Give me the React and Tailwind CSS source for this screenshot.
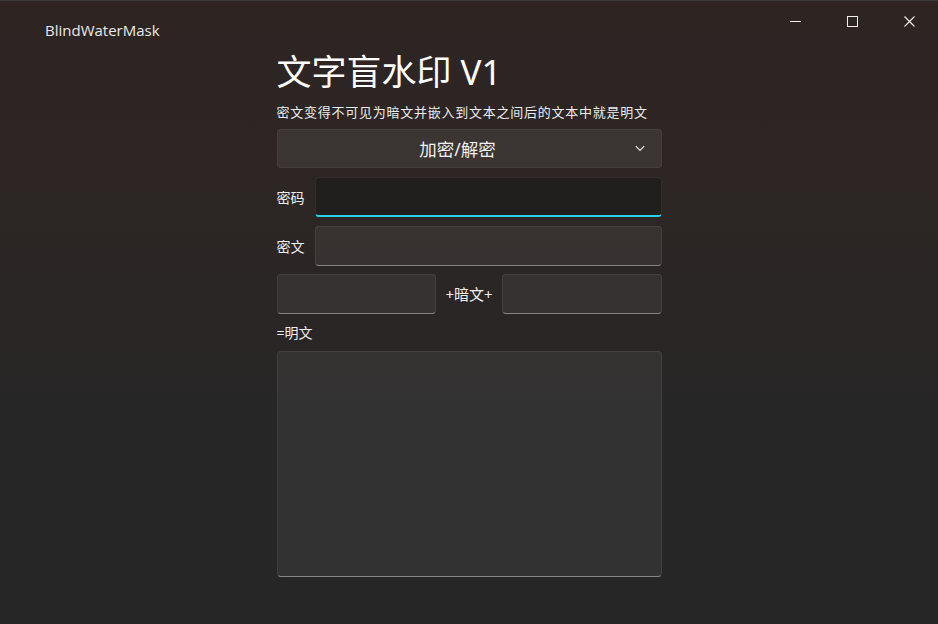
export default function App() {
  const input =
    "rounded-[4px] bg-white/[0.06] border border-white/[0.07] border-b-[#8a8684] h-[40px]";
  return (
    <div className="relative w-[938px] h-[624px] overflow-hidden text-white bg-[linear-gradient(180deg,#2e2523_0%,#2c2624_35%,#272626_65%,#262626_100%)] font-['Noto_Sans','Noto_Sans_CJK_SC',sans-serif]">
      <div className="flex justify-between h-[48px] border-t border-[#3a3a3a]">
        <div className="pl-[45px] pt-[19px] text-[15px] leading-[20px] text-[#e8e8e8] font-['Open_Sans','Noto_Sans_CJK_SC',sans-serif]">
          BlindWaterMask
        </div>
        <div className="flex">
          <div className="w-[57px] h-[40px] flex items-center justify-center">
            <svg width="11" height="11" viewBox="0 0 11 11">
              <path d="M0 5.5 H11" stroke="#f0f0f0" strokeWidth="1" />
            </svg>
          </div>
          <div className="w-[57px] h-[40px] flex items-center justify-center">
            <svg width="11" height="11" viewBox="0 0 11 11">
              <rect x="0.5" y="0.5" width="10" height="10" fill="none" stroke="#f0f0f0" strokeWidth="1" />
            </svg>
          </div>
          <div className="w-[57px] h-[40px] flex items-center justify-center">
            <svg width="11" height="11" viewBox="0 0 11 11">
              <path d="M0.5 0.5 L10.5 10.5 M10.5 0.5 L0.5 10.5" stroke="#f0f0f0" strokeWidth="1.1" />
            </svg>
          </div>
        </div>
      </div>

      <div className="mx-auto w-[385px] flex flex-col">
        <div className="text-[35px] leading-[44px] mt-[2px] text-white">文字盲水印 V1</div>
        <div className="text-[13px] tracking-[0.75px] leading-[18px] mt-[9px] text-[#ececec] whitespace-nowrap">
          密文变得不可见为暗文并嵌入到文本之间后的文本中就是明文
        </div>
        <div className="mt-[8px] h-[39px] rounded-[4px] bg-white/[0.07] border border-white/[0.05] flex items-center relative">
          <div className="flex-1 text-center text-[17.5px] leading-[24px] text-[#f0f0f0] pr-[23px]">加密/解密</div>
          <svg className="absolute right-[16px] top-[15px]" width="10" height="7" viewBox="0 0 10 7">
            <path d="M0.8 1.2 L5 5.4 L9.2 1.2" fill="none" stroke="#e8e8e8" strokeWidth="1.2" />
          </svg>
        </div>

        <div className="mt-[9px] flex items-center">
          <div className="w-[38px] text-[14px] text-[#eeeeee]">密码</div>
          <div className="flex-1 h-[40px] rounded-[4px] bg-[#211f1e] border border-white/[0.07] border-b-2 border-b-[#28d3e8]" />
        </div>
        <div className="mt-[9px] flex items-center">
          <div className="w-[38px] text-[14px] text-[#eeeeee]">密文</div>
          <div className={"flex-1 " + input} />
        </div>
        <div className="mt-[8px] flex items-center gap-[9px]">
          <div className={"flex-1 " + input} />
          <div className="text-[15px] text-[#eeeeee] whitespace-nowrap">+暗文+</div>
          <div className={"flex-1 " + input} />
        </div>
        <div className="mt-[9px] text-[14px] leading-[20px] text-[#eeeeee]">=明文</div>
        <div className="mt-[8px] h-[226px] rounded-[4px] bg-white/[0.06] border border-white/[0.07] border-b-[#8a8684]" />
      </div>
    </div>
  );
}
